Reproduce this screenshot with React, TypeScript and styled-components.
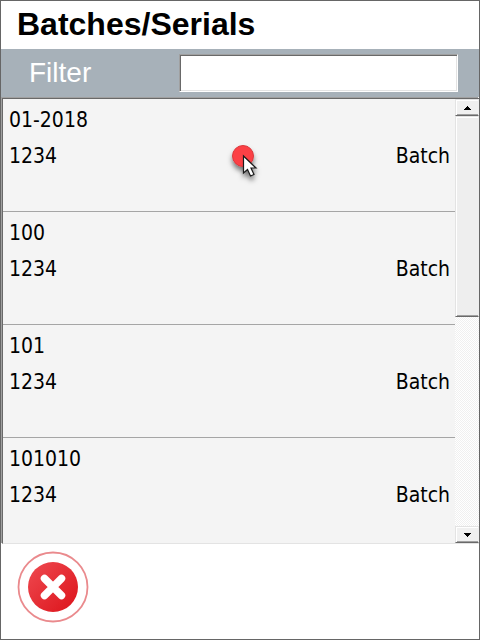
import React, { useState } from "react";
import styled, { createGlobalStyle } from "styled-components";

const GlobalStyle = createGlobalStyle`
  * { box-sizing: border-box; }
  body { margin: 0; background: #fff; }
`;

const Screen = styled.main`
  display: flex;
  flex-direction: column;
  height: 100vh;
  border: 1px solid #666;
  background: #fff;
  color: #000;
  font-family: "Liberation Sans", Arial, sans-serif;
`;

const Title = styled.h1`
  flex: none;
  margin: 0;
  padding: 0 16px 2px;
  font-size: 32px;
  line-height: 46px;
  font-weight: bold;
`;

const FilterBar = styled.div`
  flex: none;
  display: flex;
  align-items: center;
  height: 48px;
  padding: 0 21px 0 28px;
  background: #a7b1b9;
`;

const FilterLabel = styled.label`
  width: 150px;
  color: #fff;
  font-size: 28px;
  line-height: 48px;
`;

const FilterInput = styled.input`
  flex: 1;
  min-width: 0;
  height: 38px;
  margin: 0;
  padding: 0 4px;
  border: 1px solid;
  border-color: #a0a0a0 #fff #fff #a0a0a0;
  border-radius: 0;
  outline: none;
  background: #fff;
  box-shadow: inset 1px 1px 0 #696969, inset -1px -1px 0 #e3e3e3;
  font: 24px "Liberation Sans", Arial, sans-serif;
`;

const ListFrame = styled.section`
  flex: 1;
  min-height: 0;
  display: flex;
  margin: 1px 0 0 1px;
  border: solid;
  border-width: 1px 0 1px 1px;
  border-color: #696969 #696969 #e3e3e3;
  box-shadow: -1px -1px 0 #a0a0a0;
  background: #f4f4f4;
`;

const Items = styled.ul`
  flex: 1;
  min-width: 0;
  overflow: hidden;
  margin: 0;
  padding: 0;
  list-style: none;
`;

const Item = styled.li`
  position: relative;
  height: 113px;
  padding: 3px 5px 0 6px;
  border-bottom: 1px solid #a5a5a5;
  font-family: "DejaVu Sans Condensed", "Noto Sans", sans-serif;
  font-size: 21px;
  line-height: 36px;
`;

const ItemDetails = styled.div`
  display: flex;
  justify-content: space-between;
`;

const Scrollbar = styled.div`
  flex: none;
  display: flex;
  flex-direction: column;
  width: 24px;
`;

const ArrowButton = styled.button`
  flex: none;
  display: flex;
  align-items: center;
  justify-content: center;
  height: 17px;
  margin: 0;
  padding: 0;
  border: 1px solid;
  border-color: #e3e3e3 #f0f0f0 #696969 #e3e3e3;
  border-radius: 0;
  background: #f0f0f0;
  box-shadow: inset 1px 1px 0 #fff, inset 0 -1px 0 #a0a0a0;
`;

const Track = styled.div`
  flex: 1;
  min-height: 0;
  background: repeating-conic-gradient(#f0f0f0 0 25%, #fff 0 50%) 0 0 / 2px 2px;
`;

const Thumb = styled.div`
  height: 49%;
  border: 1px solid;
  border-color: #e3e3e3 #eee #696969 #e3e3e3;
  background: #eee;
  box-shadow: inset 1px 1px 0 #fff, inset 0 -1px 0 #a0a0a0;
`;

const Footer = styled.footer`
  flex: none;
  height: 95px;
  padding: 7px 16px;
`;

const CloseButton = styled.button`
  display: block;
  margin: 0;
  padding: 0;
  border: 0;
  background: none;
`;

const TapMarker = styled.svg`
  position: absolute;
  top: 43px;
  left: calc(50% + 2px);
  overflow: visible;
`;

const batches = ["01-2018", "100", "101", "101010"];

function Arrow({ down = false }: { down?: boolean }) {
  return (
    <svg width="7" height="4" viewBox="0 0 7 4" shapeRendering="crispEdges" aria-hidden="true">
      <path d={down ? "M0 0h7v1H0zM1 1h5v1H1zM2 2h3v1H2zM3 3h1v1H3z" : "M3 0h1v1H3zM2 1h3v1H2zM1 2h5v1H1zM0 3h7v1H0z"} />
    </svg>
  );
}

function Pointer() {
  return (
    <TapMarker width="30" height="36" viewBox="0 0 30 36" aria-hidden="true">
      <defs>
        <filter id="pointer-shadow" x="-50%" y="-50%" width="200%" height="200%">
          <feDropShadow dx="0" dy="4" stdDeviation="2.5" floodOpacity="0.5" />
        </filter>
      </defs>
      <g filter="url(#pointer-shadow)">
        <circle cx="12" cy="14" r="10.5" fill="#fc4045" stroke="#d9383d" />
        <path d="M12.5 14v17l4-3.500 3 6.500 3.500-1.500-3-6.500h5z" fill="#fff" stroke="#1a1a1a" strokeWidth="1.200" />
      </g>
    </TapMarker>
  );
}

function CloseIcon() {
  return (
    <svg width="72" height="72" viewBox="0 0 72 72" display="block" aria-hidden="true">
      <defs>
        <linearGradient id="close-fill" x1="0" y1="0" x2="1" y2="1">
          <stop offset="0.15" stopColor="#ec4249" />
          <stop offset="0.85" stopColor="#df1b22" />
        </linearGradient>
      </defs>
      <circle cx="36" cy="36" r="34.500" fill="#fff" stroke="#ea8a8d" strokeWidth="1.800" />
      <circle cx="36" cy="36" r="25" fill="url(#close-fill)" />
      <path d="M27.500 27.500l17 17M44.500 27.500l-17 17" stroke="#fff" strokeWidth="7.500" strokeLinecap="round" />
    </svg>
  );
}

export default function App() {
  const [filter, setFilter] = useState("");
  return (
    <>
      <GlobalStyle />
      <Screen>
        <Title>Batches/Serials</Title>
        <FilterBar>
          <FilterLabel htmlFor="filter">Filter</FilterLabel>
          <FilterInput id="filter" type="text" value={filter} onChange={(e) => setFilter(e.target.value)} />
        </FilterBar>
        <ListFrame>
          <Items>
            {batches.filter((batch) => batch.includes(filter)).map((batch, index) => (
              <Item key={batch}>
                <div>{batch}</div>
                <ItemDetails>
                  <span>1234</span>
                  <span>Batch</span>
                </ItemDetails>
                {index === 0 && <Pointer />}
              </Item>
            ))}
          </Items>
          <Scrollbar>
            <ArrowButton type="button" aria-label="Scroll up"><Arrow /></ArrowButton>
            <Track><Thumb /></Track>
            <ArrowButton type="button" aria-label="Scroll down"><Arrow down /></ArrowButton>
          </Scrollbar>
        </ListFrame>
        <Footer>
          <CloseButton type="button" aria-label="Close"><CloseIcon /></CloseButton>
        </Footer>
      </Screen>
    </>
  );
}
